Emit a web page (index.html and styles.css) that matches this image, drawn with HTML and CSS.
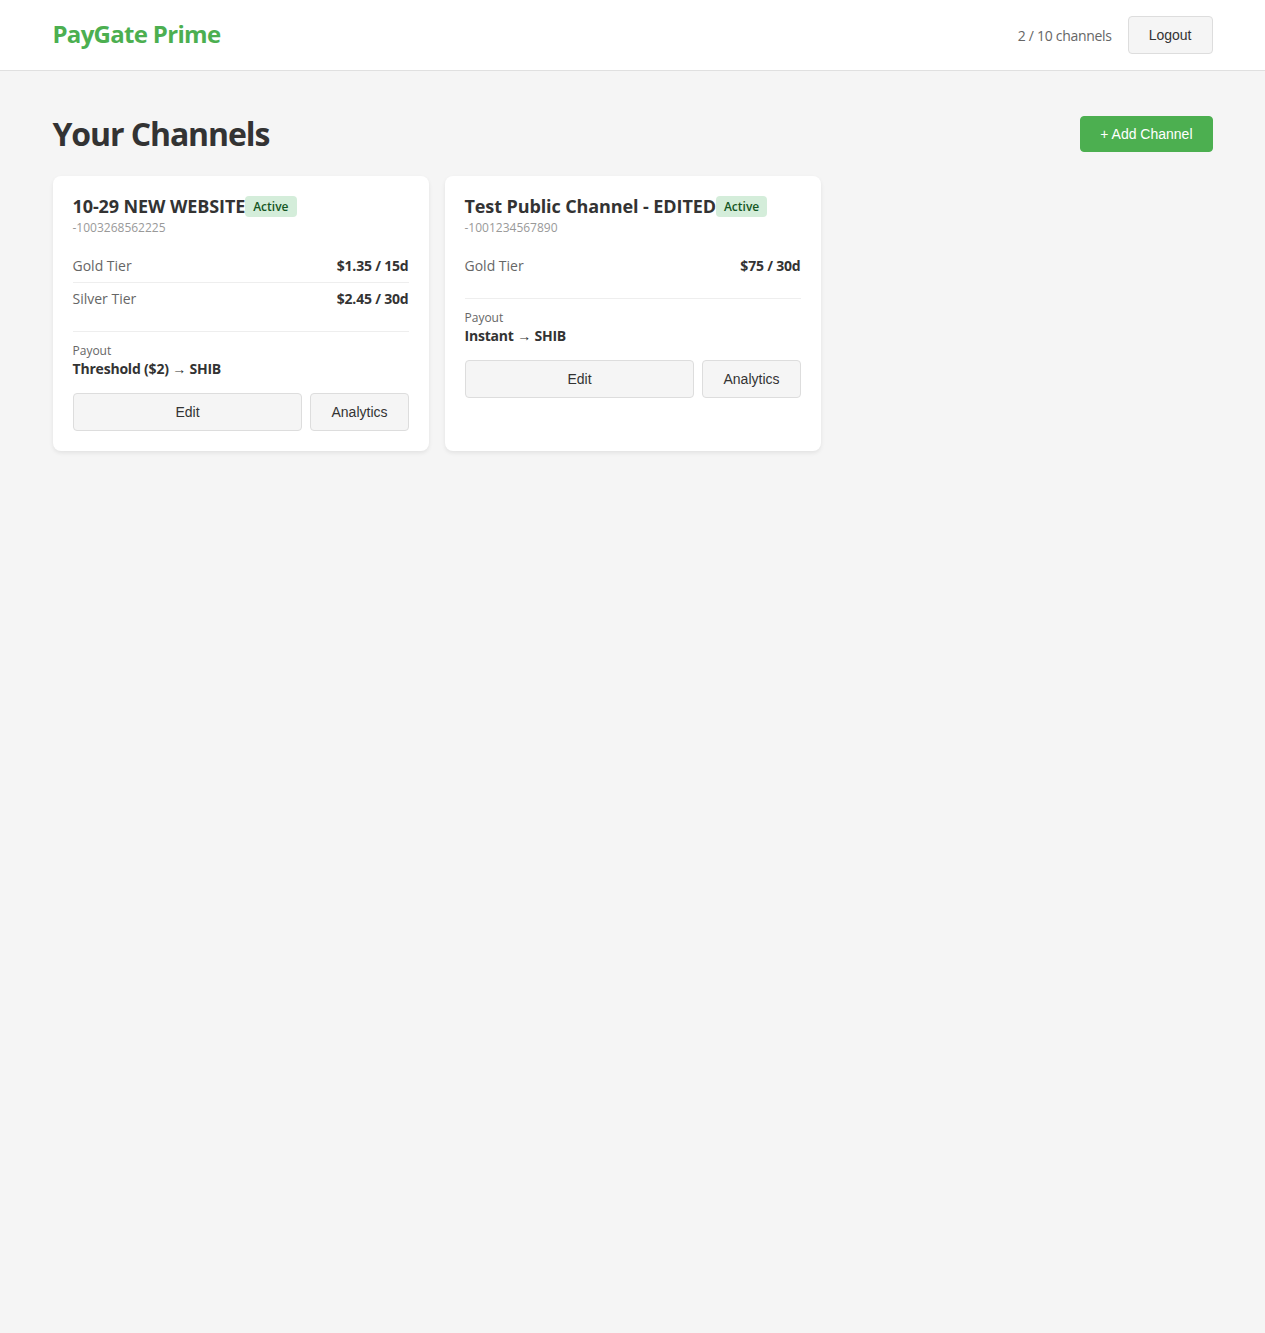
FILE: index.html
```html
<!DOCTYPE html>
<html lang="en">
<head>
<meta charset="utf-8">
<title>PayGate Prime</title>
<link rel="stylesheet" href="styles.css">
</head>
<body>
<header class="topbar">
  <div class="container topbar-inner">
    <div class="logo">PayGate Prime</div>
    <div class="topbar-right">
      <span class="count">2 / 10 channels</span>
      <button class="btn">Logout</button>
    </div>
  </div>
</header>
<main class="container main">
  <div class="page-head">
    <h1 class="page-title">Your Channels</h1>
    <button class="btn btn-primary">+ Add Channel</button>
  </div>
  <div class="grid">
    <div class="card">
      <div class="card-head">
        <div class="card-title-row"><span class="card-title">10-29 NEW WEBSITE</span><span class="badge">Active</span></div>
        <div class="card-id">-1003268562225</div>
      </div>
      <div class="tiers">
        <div class="tier"><span class="tier-name">Gold Tier</span><span class="tier-price">$1.35 / 15d</span></div>
        <div class="tier"><span class="tier-name">Silver Tier</span><span class="tier-price">$2.45 / 30d</span></div>
      </div>
      <div class="payout">
        <div class="payout-label">Payout</div>
        <div class="payout-value">Threshold ($2) → SHIB</div>
      </div>
      <div class="actions">
        <button class="btn btn-grow">Edit</button>
        <button class="btn">Analytics</button>
      </div>
    </div>
    <div class="card">
      <div class="card-head">
        <div class="card-title-row"><span class="card-title">Test Public Channel - EDITED</span><span class="badge">Active</span></div>
        <div class="card-id">-1001234567890</div>
      </div>
      <div class="tiers">
        <div class="tier"><span class="tier-name">Gold Tier</span><span class="tier-price">$75 / 30d</span></div>
      </div>
      <div class="payout">
        <div class="payout-label">Payout</div>
        <div class="payout-value">Instant → SHIB</div>
      </div>
      <div class="actions">
        <button class="btn btn-grow">Edit</button>
        <button class="btn">Analytics</button>
      </div>
    </div>
  </div>
</main>
</body>
</html>
```
FILE: styles.css
```css
* { box-sizing: border-box; }
body {
  margin: 0;
  background: #f5f5f5;
  color: #333;
  font-family: "Open Sans", "Noto Sans", sans-serif;
  min-height: 1333px;
}
.container {
  max-width: 1200px;
  margin: 0 auto;
  padding: 0 20px;
}
.topbar {
  background: #fff;
  border-bottom: 1px solid #e0e0e0;
}
.topbar-inner {
  display: flex;
  justify-content: space-between;
  align-items: center;
  height: 70px;
}
.logo {
  color: #4caf50;
  font-size: 24px;
  line-height: 28px;
  font-weight: 700;
  letter-spacing: -0.7px;
  margin-bottom: 2px;
}
.topbar-right {
  display: flex;
  align-items: center;
  gap: 16px;
}
.count {
  font-size: 14px;
  color: #666;
  letter-spacing: -0.3px;
}
.btn {
  font-family: "Liberation Sans", Arial, sans-serif;
  font-size: 14px;
  line-height: 16px;
  color: #333;
  background: #f5f5f5;
  border: 1px solid #ddd;
  border-radius: 4px;
  padding: 10px 20px;
  cursor: pointer;
}
.btn-primary {
  background: #4caf50;
  border-color: #4caf50;
  color: #fff;
  padding: 9px 19px;
}
.main {
  padding-top: 44px;
}
.page-head {
  display: flex;
  justify-content: space-between;
  align-items: center;
  height: 38px;
  margin-bottom: 23px;
}
.page-title {
  margin: 0;
  font-size: 32px;
  line-height: 38px;
  font-weight: 700;
  letter-spacing: -1.1px;
}
.grid {
  display: grid;
  grid-template-columns: repeat(auto-fill, minmax(350px, 1fr));
  gap: 16px;
}
.card {
  background: #fff;
  border-radius: 8px;
  box-shadow: 0 2px 4px rgba(0,0,0,0.08);
  padding: 20px;
}
.card-head {
  margin-bottom: 15px;
}
.card-title-row {
  display: flex;
  align-items: center;
  height: 21px;
}
.card-title {
  font-size: 18px;
  line-height: 21px;
  font-weight: 700;
  letter-spacing: -0.1px;
}
.badge {
  background: #d4edda;
  color: #155724;
  font-size: 12px;
  font-weight: 600;
  line-height: 17px;
  padding: 2px 8px;
  border-radius: 4px;
}
.card-id {
  margin-top: 4px;
  font-size: 12px;
  line-height: 14px;
  color: #999;
}
.tiers {
  margin-bottom: 16px;
}
.tier {
  display: flex;
  justify-content: space-between;
  font-size: 14px;
  line-height: 16px;
  padding: 8px 0;
  border-bottom: 1px solid #eee;
}
.tier:last-child {
  border-bottom: none;
}
.tier-name { color: #666; }
.tier-price { font-weight: 700; letter-spacing: -0.2px; }
.payout {
  border-top: 1px solid #eee;
  padding-top: 12px;
  margin-bottom: 16px;
}
.payout-label {
  font-size: 12px;
  line-height: 14px;
  color: #666;
}
.payout-value {
  margin-top: 2px;
  font-size: 14px;
  line-height: 17px;
  font-weight: 700;
  letter-spacing: -0.2px;
}
.actions {
  display: flex;
  gap: 8px;
}
.btn-grow { flex: 1; }
```
